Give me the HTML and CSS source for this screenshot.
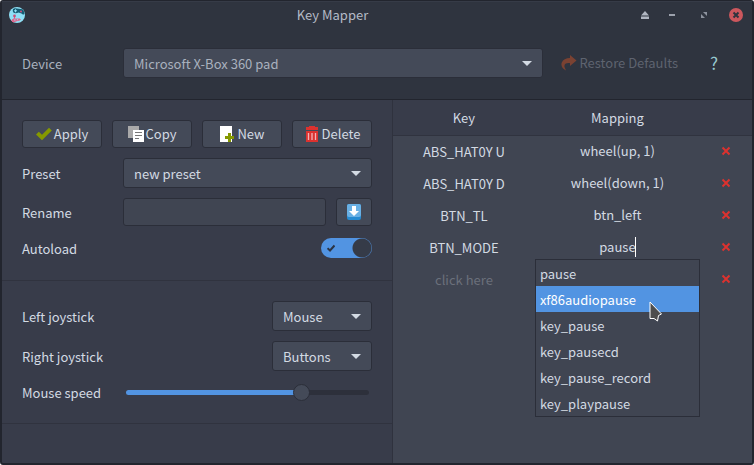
FILE: index.html
```html
<!DOCTYPE html>
<html lang="en">
<head>
<meta charset="utf-8">
<title>Key Mapper</title>
<link rel="stylesheet" href="styles.css">
</head>
<body>
<div class="window">
  <header class="titlebar">
    <svg class="app-icon" viewBox="0 0 16 16" aria-hidden="true">
      <circle cx="8" cy="8" r="8" fill="#8fe0f5"/>
      <path d="M4 2.2 Q5 .8 8 1.6 L13.5 2.2 Q15.6 4.5 15.4 7 Q14 8.3 12.5 6.6 L9.5 5.4 Q7 6.8 4.6 5.8 Q3 4.5 4 2.2Z" fill="#155e75"/>
      <path d="M5 3.8h3M6.500 2.300v3" stroke="#8fe0f5" stroke-width="1"/>
      <circle cx="12" cy="4.600" r="1" fill="#d8507c"/>
      <path d="M5.500 9v3M2.800 13.800 4 12H11L11.300 12.800 7 14 4 15Z" stroke="#e0668c" stroke-width="1" fill="#e0668c"/>
      <circle cx="5.500" cy="9" r="1.400" fill="#c94f78"/>
      <path d="M5 13h1.500M8 12.700h1" stroke="#8fe0f5" stroke-width="1"/>
    </svg>
    <h1 class="title">Key Mapper</h1>
    <div class="window-buttons">
      <button class="wbtn wbtn-narrow" type="button" aria-label="Keep above"><svg width="8" height="8" viewBox="0 0 8 8"><path d="M4 0 8 4.500H0ZM0 5.500h8V8H0Z" fill="#b0b6c1"/></svg></button>
      <button class="wbtn" type="button" aria-label="Minimize"><svg width="6" height="2" viewBox="0 0 6 2"><path d="M0 0h6v2H0Z" fill="#9ca1ac"/></svg></button>
      <button class="wbtn" type="button" aria-label="Maximize"><svg width="6" height="6" viewBox="0 0 6 6"><path d="M2 0h4v4ZM0 2v4h4Z" fill="#8c929e"/></svg></button>
      <button class="wbtn" type="button" aria-label="Close"><svg width="14" height="14" viewBox="0 0 14 14"><circle cx="7" cy="7" r="7" fill="#cc575d"/><path d="m4.500 4.500 5 5m0-5-5 5" stroke="#2f343f" stroke-width="2"/></svg></button>
    </div>
  </header>

  <section class="device">
    <label class="label" for="device">Device</label>
    <span class="combo combo-grow"><select id="device"><option>Microsoft X-Box 360 pad</option></select></span>
    <button class="flat restore" type="button" disabled>
      <svg class="icon" viewBox="0 0 16 16"><path d="M9 0 15.500 5.500 9 11V8C5 7.500 3 9 3.500 12L5 15.500C1.500 14-.5 11 .8 7.500 2 4.500 5 3 9 3Z" fill="#7b4232"/></svg>
      Restore Defaults
    </button>
    <button class="flat help" type="button" aria-label="Help">?</button>
  </section>

  <main class="content">
    <div class="settings">
      <section class="group">
        <div class="actions">
          <button class="btn" type="button"><svg class="icon" viewBox="0 0 16 16"><path d="M0 8.500 2.800 5.700 6 8.800 13 1.800 15.800 4.600 6 14.300Z" fill="#859900"/></svg>Apply</button>
          <button class="btn" type="button"><svg class="icon" viewBox="0 0 16 16"><path d="M0 0h11v12H0Z" fill="#a9a9a9"/><path d="M5 4h11v12H5Z" fill="#fff"/><path d="M7 6.500h7M7 9.500h7M7 12.500h4" stroke="#777" stroke-width="1"/></svg>Copy</button>
          <button class="btn" type="button"><svg class="icon" viewBox="0 0 16 16"><path d="M1 0h12v16H1Z" fill="#fff"/><path d="M9 7h3v3h3v3h-3v3H9v-3H6v-3h3Z" fill="#859900"/></svg>New</button>
          <button class="btn" type="button"><svg class="icon" viewBox="0 0 16 16"><path d="M2 1h3V0h6v1h3v3H2ZM2 5h12v11H2Z" fill="#dc322f"/><path d="M4.500 7v7M8 7v7M11.500 7v7" stroke="#f1b4b8" stroke-width="1.300"/></svg>Delete</button>
        </div>
        <div class="row">
          <label class="label" for="preset">Preset</label>
          <span class="combo combo-grow"><select id="preset"><option>new preset</option></select></span>
        </div>
        <div class="row">
          <label class="label" for="rename">Rename</label>
          <input class="entry" id="rename" type="text">
          <button class="btn btn-save" type="button" aria-label="Save name"><svg class="icon" viewBox="0 0 16 16"><rect x="1" width="14" height="16" rx="2" fill="#268bd2"/><rect x="1" width="14" height="13" rx="2" fill="#69b0e4"/><path d="M6 2h4v5h3l-5 5-5-5h3Z" fill="#fff"/></svg></button>
        </div>
        <div class="row row-between row-autoload">
          <label class="label" for="autoload">Autoload</label>
          <span class="switch">
            <input id="autoload" type="checkbox" checked>
            <svg class="switch-check" viewBox="0 0 8 8" aria-hidden="true"><path d="M.5 4.200 3 6.500 7.500 1.500" fill="none" stroke="#2b3445" stroke-width="2"/></svg>
          </span>
        </div>
      </section>
      <section class="group">
        <div class="row row-between">
          <label class="label" for="left">Left joystick</label>
          <span class="combo combo-small"><select id="left"><option>Mouse</option></select></span>
        </div>
        <div class="row row-between">
          <label class="label" for="right">Right joystick</label>
          <span class="combo combo-small"><select id="right"><option>Buttons</option></select></span>
        </div>
        <div class="row">
          <label class="label" for="speed">Mouse speed</label>
          <input class="slider" id="speed" type="range" min="0" max="100" value="74">
        </div>
      </section>
    </div>

    <section class="mappings">
      <table>
        <thead><tr><th class="col-key">Key</th><th class="col-map">Mapping</th><th class="col-del"></th></tr></thead>
        <tbody>
          <tr><td class="key">ABS_HAT0Y U</td><td><input class="map" aria-label="Mapping 1" value="wheel(up, 1)"></td><td><button class="del" type="button" aria-label="Delete"><svg width="10" height="10" viewBox="0 0 10 10"><path d="m1.500 1.500 7 7m0-7-7 7"/></svg></button></td></tr>
          <tr><td class="key">ABS_HAT0Y D</td><td><input class="map" aria-label="Mapping 2" value="wheel(down, 1)"></td><td><button class="del" type="button" aria-label="Delete"><svg width="10" height="10" viewBox="0 0 10 10"><path d="m1.500 1.500 7 7m0-7-7 7"/></svg></button></td></tr>
          <tr><td class="key">BTN_TL</td><td><input class="map" aria-label="Mapping 3" value="btn_left"></td><td><button class="del" type="button" aria-label="Delete"><svg width="10" height="10" viewBox="0 0 10 10"><path d="m1.500 1.500 7 7m0-7-7 7"/></svg></button></td></tr>
          <tr><td class="key">BTN_MODE</td><td>
            <div class="editing">
              <input class="map" aria-label="Mapping 4" value="pause">
              <span class="caret"></span>
              <ul class="popup">
                <li>pause</li>
                <li class="active">xf86audiopause<svg class="pointer" width="14" height="21" viewBox="0 0 14 21"><path d="M1 1 12.500 13 9.500 14.500 8.500 20 5 17.500 1 17.500Z" fill="#4d4d4d" stroke="#fff" stroke-width="1"/></svg></li>
                <li>key_pause</li>
                <li>key_pausecd</li>
                <li>key_pause_record</li>
                <li>key_playpause</li>
              </ul>
            </div>
          </td><td><button class="del" type="button" aria-label="Delete"><svg width="10" height="10" viewBox="0 0 10 10"><path d="m1.500 1.500 7 7m0-7-7 7"/></svg></button></td></tr>
          <tr><td class="key empty">click here</td><td><input class="map" aria-label="Mapping 5" value=""></td><td><button class="del" type="button" aria-label="Delete"><svg width="10" height="10" viewBox="0 0 10 10"><path d="m1.500 1.500 7 7m0-7-7 7"/></svg></button></td></tr>
        </tbody>
      </table>
    </section>
  </main>
</div>
</body>
</html>
```
FILE: styles.css
```css
* { box-sizing: border-box; }

body {
  margin: 0;
  background: #fff;
  color: #d3dae3;
  font: 13px/20px "Noto Sans CJK JP", "Noto Sans", sans-serif;
}

button, input, select {
  margin: 0;
  padding: 0;
  border: 0;
  background: none;
  color: inherit;
  font: inherit;
  outline: none;
}

.window {
  display: flex;
  flex-direction: column;
  min-height: 100vh;
  border: 2px solid #22252e;
  border-top-width: 1px;
  border-radius: 3px;
  background: #383c4a;
}

.titlebar {
  display: grid;
  grid-template-columns: auto 1fr auto;
  column-gap: 8px;
  align-items: center;
  height: 27px;
  padding-left: 7px;
  background: #2f343f;
  box-shadow: inset 0 1px #363b47;
  color: #b4bbc7;
  text-align: center;
}

.app-icon { width: 16px; height: 16px; }
.title { margin: 0; padding-left: 6px; font-size: 13px; font-weight: 400; }
.window-buttons { display: flex; justify-content: flex-end; }

.wbtn {
  display: flex;
  align-items: center;
  justify-content: center;
  width: 32px;
  height: 26px;
}
.wbtn-narrow { width: 22px; }

.device {
  display: flex;
  align-items: center;
  gap: 10px;
  padding: 20px 20px 21px;
  border-bottom: 1px solid #22252e;
  background: #2f343f;
  color: #a9b1be;
}
.label { width: 91px; padding-top: 2px; }

.content {
  flex: 1;
  display: grid;
  grid-template-columns: 391fr 359fr;
}

.settings { border-right: 1px solid #2f323e; }

.group {
  display: flex;
  flex-direction: column;
  gap: 10px;
  padding: 20px;
  border-bottom: 1px solid #30333f;
}

.actions {
  display: grid;
  grid-template-columns: repeat(4, 1fr);
  gap: 10px;
}

.row { display: flex; align-items: center; gap: 10px; }
.row-between { justify-content: space-between; }
.row-autoload { height: 24px; }

.btn, .flat {
  display: flex;
  align-items: center;
  justify-content: center;
  gap: 2px;
  height: 28px;
}
.btn {
  border: 1px solid #2b2e39;
  border-radius: 3px;
  background: #444a58;
}
.btn-save { width: 36px; }
.icon { width: 16px; height: 16px; flex: none; }

.restore { padding: 0 8px; color: #5e636f; }
.help { width: 36px; color: #97c9d0; font-size: 17px; }

.combo { position: relative; display: flex; }
.combo select {
  appearance: none;
  width: 100%;
  height: 30px;
  padding: 2px 30px 0 10px;
  border: 1px solid #2b2e39;
  border-radius: 3px;
  background: #444a58;
}
.combo::after {
  content: "";
  position: absolute;
  right: 11px;
  top: 13px;
  border: 5px solid transparent;
  border-top-color: #d3dae3;
  border-bottom: 0;
  pointer-events: none;
}
.combo-grow { flex: 1; }
.combo-small { width: 100px; }

.entry {
  flex: 1;
  min-width: 0;
  height: 28px;
  padding: 0 8px;
  border: 1px solid #2b2e39;
  border-radius: 3px;
  background: #404552;
}

.switch { position: relative; display: flex; }
.switch input {
  appearance: none;
  width: 51px;
  height: 20px;
  border-radius: 10px;
  background: radial-gradient(circle at 41px 10px, #353b48 9px, #5294e2 10px);
}
.switch-check {
  position: absolute;
  left: 6px;
  top: 6px;
  width: 8px;
  height: 8px;
}

.slider {
  appearance: none;
  flex: 1;
  min-width: 0;
  height: 21px;
  margin: 0 3px;
}
.slider::-webkit-slider-runnable-track {
  height: 5px;
  border-radius: 3px;
  background: linear-gradient(90deg, #5294e2 73%, #2d303b 73%);
}
.slider::-webkit-slider-thumb {
  appearance: none;
  width: 17px;
  height: 17px;
  margin-top: -6px;
  border: 1px solid #2b2e39;
  border-radius: 50%;
  background: #444a58;
}

.mappings { background: #404552; }
table { width: 100%; table-layout: fixed; border-collapse: collapse; }
.col-map { width: 46%; }
.col-del { width: 52px; }
th {
  height: 35px;
  padding: 2px 0 0;
  border-bottom: 1px solid #30333f;
  background: #383c4a;
  font-weight: 400;
}
td { height: 32px; padding: 0; text-align: center; }
.key { padding-top: 1px; }
.empty { color: #6b707b; }

.map { display: block; width: 100%; height: 24px; padding-bottom: 1px; text-align: center; }
.editing { position: relative; }
.caret {
  position: absolute;
  left: calc(50% + 18px);
  top: 2px;
  width: 1px;
  height: 20px;
  background: #fff;
}
.popup {
  position: absolute;
  z-index: 1;
  top: 100%;
  left: 0;
  right: 0;
  margin: 0;
  padding: 0;
  border: 1px solid #2b2e39;
  background: #404552;
  list-style: none;
  text-align: left;
}
.popup li { position: relative; height: 26px; padding: 4px 4px 2px; }
.popup .active { background: #5294e2; color: #fff; }
.pointer { position: absolute; left: 113px; top: 15px; z-index: 2; }

.del {
  display: flex;
  align-items: center;
  justify-content: center;
  width: 100%;
  height: 24px;
}
.del path { stroke: #dc322f; stroke-width: 2; }
```
